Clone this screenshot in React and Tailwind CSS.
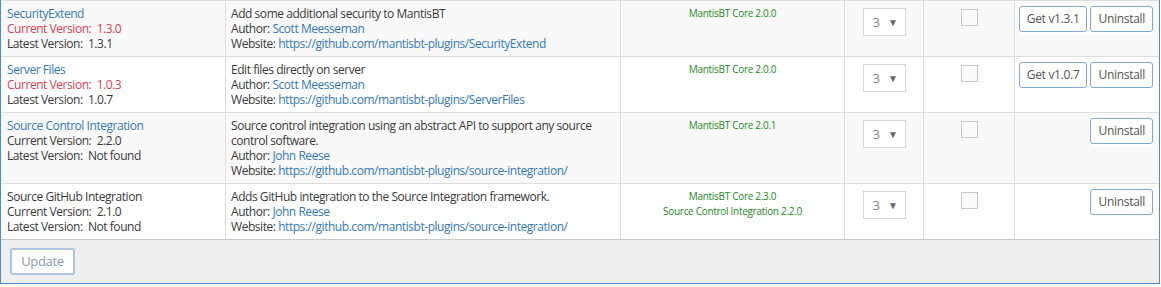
import React from "react";

const plugins = [
  {
    name: "SecurityExtend",
    isLink: true,
    current: "1.3.0",
    latest: "1.3.1",
    outdated: true,
    desc: ["Add some additional security to MantisBT"],
    author: "Scott Meesseman",
    site: "https://github.com/mantisbt-plugins/SecurityExtend",
    deps: ["MantisBT Core 2.0.0"],
    upgrade: "Get v1.3.1",
  },
  {
    name: "Server Files",
    isLink: true,
    current: "1.0.3",
    latest: "1.0.7",
    outdated: true,
    desc: ["Edit files directly on server"],
    author: "Scott Meesseman",
    site: "https://github.com/mantisbt-plugins/ServerFiles",
    deps: ["MantisBT Core 2.0.0"],
    upgrade: "Get v1.0.7",
  },
  {
    name: "Source Control Integration",
    isLink: true,
    current: "2.2.0",
    latest: "Not found",
    outdated: false,
    desc: [
      "Source control integration using an abstract API to support any source",
      "control software.",
    ],
    author: "John Reese",
    site: "https://github.com/mantisbt-plugins/source-integration/",
    deps: ["MantisBT Core 2.0.1"],
    upgrade: null,
  },
  {
    name: "Source GitHub Integration",
    isLink: false,
    current: "2.1.0",
    latest: "Not found",
    outdated: false,
    desc: ["Adds GitHub integration to the Source Integration framework."],
    author: "John Reese",
    site: "https://github.com/mantisbt-plugins/source-integration/",
    deps: ["MantisBT Core 2.3.0", "Source Control Integration 2.2.0"],
    upgrade: null,
  },
];

const btn =
  "h-[26px] px-[7px] rounded-[3px] border border-[#7fa9d2] bg-white text-[12px] tracking-[-0.3px] text-[#555] leading-none";

function PluginRow({ p, striped }) {
  return (
    <div
      className={`flex border-t border-[#ddd] ${
        striped ? "bg-[#f9f9f9]" : "bg-white"
      }`}
    >
      {/* name + versions */}
      <div className="w-[224px] px-[6px] py-[5px]">
        <div className={p.isLink ? "text-[#337ab7]" : ""}>{p.name}</div>
        <div className={p.outdated ? "text-[#d9404e]" : ""}>
          Current Version:{"\u00a0 "}
          {p.current}
        </div>
        <div>
          Latest Version:{"\u00a0 "}
          {p.latest}
        </div>
      </div>

      {/* description */}
      <div className="w-[395px] border-l border-[#ddd] pl-[5px] pr-[6px] py-[5px]">
        {p.desc.map((line) => (
          <div key={line} className="whitespace-nowrap">
            {line}
          </div>
        ))}
        <div>
          Author: <span className="text-[#337ab7]">{p.author}</span>
        </div>
        <div>
          Website: <span className="text-[#337ab7]">{p.site}</span>
        </div>
      </div>

      {/* dependencies */}
      <div className="w-[224px] border-l border-[#ddd] py-[5px] text-center">
        {p.deps.map((d) => (
          <div key={d} className="text-[10px] tracking-[-0.3px] text-[#248a24]">
            {d}
          </div>
        ))}
      </div>

      {/* priority */}
      <div className="w-[79px] border-l border-[#ddd] pt-[7px] flex justify-center">
        <div className="w-[43px] h-[28px] border border-[#d5d5d5] bg-white flex items-center justify-between pl-[9px] pr-[7px]">
          <span className="text-[#858585] text-[13px]">3</span>
          <span className="text-[10px] text-[#666]">▼</span>
        </div>
      </div>

      {/* protected */}
      <div className="w-[91px] border-l border-[#ddd] pt-[8px] flex justify-center">
        <div className="w-[17px] h-[17px] border border-[#c8c8c8] bg-[#fafafa]" />
      </div>

      {/* actions */}
      <div className="flex-1 border-l border-[#ddd] pt-[5px] pr-[6px] flex justify-end items-start">
        <div className="flex gap-[3px] bg-white pb-[3px]">
          {p.upgrade && <button className={btn}>{p.upgrade}</button>}
          <button className={btn}>Uninstall</button>
        </div>
      </div>
    </div>
  );
}

export default function App() {
  return (
    <div className="bg-white h-[287px] font-['Open_Sans',sans-serif] text-[12px] leading-[15px] tracking-[-0.45px] text-[#393939]">
      <div className="w-[1160px] border-l border-r border-b border-[#4d8ec6]">
        {plugins.map((p, i) => (
          <PluginRow key={p.name} p={p} striped={i % 2 === 0} />
        ))}
        <div className="border-t border-[#c9c9c9] bg-[#eeeeee] pl-[9px] py-[8px]">
          <button className="h-[27px] w-[65px] rounded-[3px] border-2 border-[#a9c5df] bg-white text-[13px] tracking-[-0.3px] text-[#8a98a8]">
            Update
          </button>
        </div>
      </div>
    </div>
  );
}
